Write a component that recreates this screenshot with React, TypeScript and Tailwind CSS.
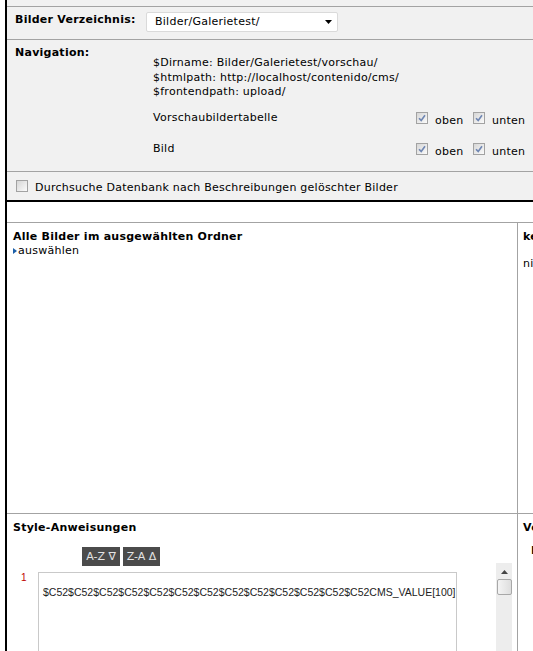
function Check({ checked = false }: { checked?: boolean }) {
  return (
    <span className="flex h-[12px] w-[12px] shrink-0 items-center justify-center border border-[#a2a2a2] bg-linear-to-br from-[#d6d6d6] to-[#fbfbfb]">
      {checked && (
        <svg width="8" height="8" viewBox="0 0 8 8">
          <path d="M1 4.2 L3.2 6.4 L7 1.2" fill="none" stroke="#6f86b2" strokeWidth="1.6" />
        </svg>
      )}
    </span>
  );
}

function OptionRow({ label }: { label: string }) {
  return (
    <div className="flex h-[14px] items-start leading-[14px]">
      <span className="w-[263px]">{label}</span>
      <div className="mt-[-2px] flex items-center">
        <Check checked />
        <span className="ml-[7px] mt-[5px] w-[38px]">oben</span>
        <Check checked />
        <span className="ml-[7px] mt-[5px]">unten</span>
      </div>
    </div>
  );
}

export default function App() {
  return (
    <div className="h-[651px] w-[533px] overflow-hidden bg-white font-['DejaVu_Sans',Verdana,sans-serif] text-[11px] tracking-[0.25px] text-black">
      <div className="ml-[5px] w-[760px] border-l-2 border-black">
        {/* einstellungen */}
        <div className="bg-[#f1f1f1] pt-[6px]">
          <div className="border-t border-[#a3a3a3]">
            <div className="flex h-[33px] items-start border-b border-[#a3a3a3]">
              <span className="w-[139px] pl-[8px] pt-[6px] font-bold leading-[14px]">Bilder Verzeichnis:</span>
              <div className="mt-[5px] flex h-[20px] w-[192px] items-center justify-between rounded-[2px] border border-[#dadada] bg-white pl-[8px] pr-[5px] leading-[14px]">
                <span>Bilder/Galerietest/</span>
                <svg width="7" height="4" viewBox="0 0 7 4">
                  <polygon points="0,0 7,0 3.5,4" fill="#000" />
                </svg>
              </div>
            </div>

            <div className="flex h-[132px] border-b border-[#a3a3a3] leading-[14px]">
              <span className="w-[146px] pl-[8px] pt-[6px] font-bold">Navigation:</span>
              <div className="pt-[16px]">
                <div className="leading-[14.5px]">
                  <div>$Dirname: Bilder/Galerietest/vorschau/</div>
                  <div>$htmlpath: http://localhost/contenido/cms/</div>
                  <div>$frontendpath: upload/</div>
                </div>
                <div className="mt-[11px]">
                  <OptionRow label="Vorschaubildertabelle" />
                </div>
                <div className="mt-[17px]">
                  <OptionRow label="Bild" />
                </div>
              </div>
            </div>

            <div className="flex h-[30px] items-start border-b-2 border-black pl-[9px] leading-[14px]">
              <span className="mt-[8px]">
                <Check />
              </span>
              <span className="ml-[7px] pt-[9px]">Durchsuche Datenbank nach Beschreibungen gelöschter Bilder</span>
            </div>
          </div>
        </div>

        <div className="h-[21px] border-b border-[#a3a3a3]" />

        {/* bilder */}
        <div className="flex h-[291px] border-b border-[#a3a3a3] leading-[14px]">
          <div className="w-[511px] border-r border-[#a3a3a3] pl-[6px] pt-[7px]">
            <div className="font-bold">Alle Bilder im ausgewählten Ordner</div>
            <div className="flex items-center">
              <svg width="4" height="6" viewBox="0 0 4 6" className="mr-[1px]">
                <polygon points="0,0 4,3 0,6" fill="#1d5fa8" />
              </svg>
              <span>auswählen</span>
            </div>
          </div>
          <div className="pl-[5px] pt-[7px]">
            <div className="font-bold">keine Beschreibung</div>
            <div className="mt-[13px]">nicht vorhanden</div>
          </div>
        </div>

        {/* style */}
        <div className="flex h-[200px] leading-[14px]">
          <div className="w-[511px] border-r border-[#a3a3a3] pl-[6px] pt-[7px]">
            <div className="font-bold">Style-Anweisungen</div>
            <div className="ml-[69px] mt-[12px] flex gap-[3px] tracking-normal">
              <button className="flex h-[19px] w-[38px] items-center justify-center bg-[#4b4b4b] text-[#e4e4e4]">A-Z ∇</button>
              <button className="flex h-[19px] w-[37px] items-center justify-center bg-[#4b4b4b] text-[#e4e4e4]">Z-A Δ</button>
            </div>
            <div className="-ml-[6px] mt-[-3px] flex items-start tracking-normal">
              <div className="w-[31px] pl-[14px] pt-[9px] font-['Liberation_Sans',Arial,sans-serif] text-[10px] leading-[12px] text-[#c00000]">1</div>
              <div className="mt-[9px] h-[120px] w-[419px] border border-[#c9c9c9] bg-white pl-[4px] pt-[13px] font-['Liberation_Sans',Arial,sans-serif] text-[10.5px] leading-[12px] whitespace-nowrap text-[#222]">
                $C52$C52$C52$C52$C52$C52$C52$C52$C52$C52$C52$C52$C52CMS_VALUE[100]
              </div>
              <div className="ml-[39px] flex h-[100px] w-[16px] flex-col items-center bg-[#ededed]">
                <svg width="7" height="4" viewBox="0 0 7 4" className="mt-[7px]">
                  <polygon points="0,4 7,4 3.5,0" fill="#444" />
                </svg>
                <div className="mt-[5px] h-[16px] w-[15px] rounded-[2px] border border-[#a8a8a8] bg-linear-to-r from-[#f4f4f4] to-[#dedede]" />
              </div>
            </div>
          </div>
          <div className="pl-[5px] pt-[7px]">
            <div className="font-bold">Vorschau</div>
            <div className="ml-[8px] mt-[9px] font-bold">Inhalt</div>
          </div>
        </div>
      </div>
    </div>
  );
}
